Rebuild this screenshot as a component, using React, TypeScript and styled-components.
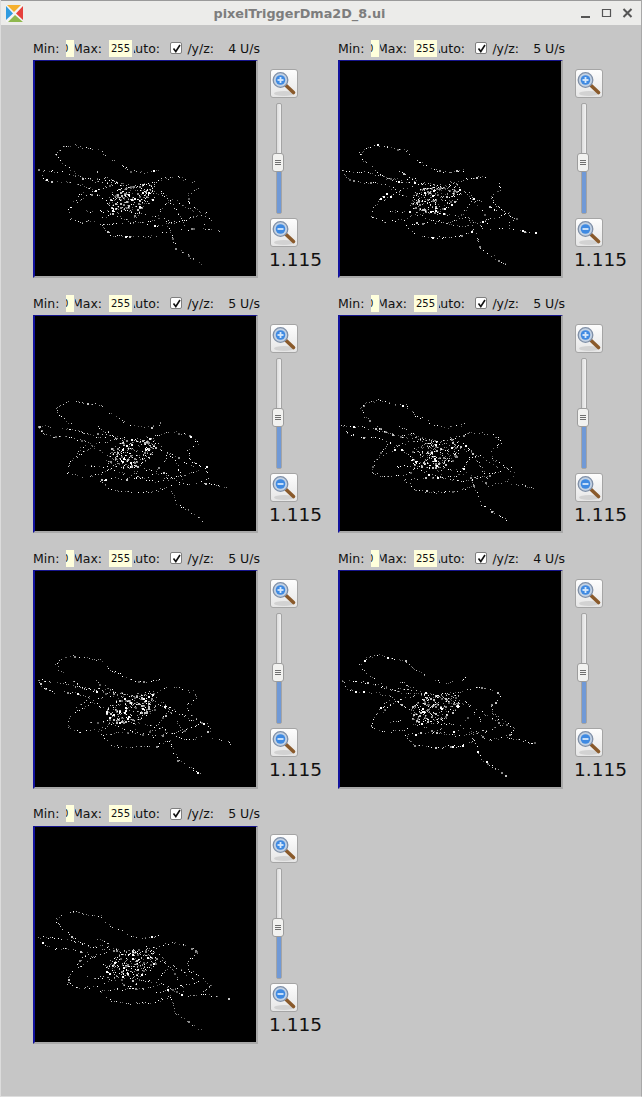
import type { FC } from "react";
import styled, { createGlobalStyle } from "styled-components";

const GlobalStyle = createGlobalStyle`
  html, body {
    margin: 0;
    padding: 0;
    background: #c6c6c6;
  }
  body {
    font-family: "DejaVu Sans", sans-serif;
  }
`;

const Window = styled.div`
  width: 642px;
  height: 1097px;
  box-sizing: border-box;
  overflow: hidden;
  background: #c6c6c6;
  border-left: 1px solid #dcdcdc;
  border-right: 1px solid #a8a8a8;
  border-bottom: 1px solid #dedede;
`;

const TitleBar = styled.div`
  height: 25px;
  display: flex;
  align-items: center;
  background: #ececea;
  border-top: 1px solid #9a9a9a;
  box-sizing: border-box;
  padding: 0 5px 0 5px;
`;

const Title = styled.div`
  flex: 1;
  text-align: center;
  padding-right: 4px;
  font-size: 12.8px;
  font-weight: bold;
  color: #7d7d7d;
`;

const WinButtons = styled.div`
  display: flex;
  gap: 10px;
  align-items: center;
  margin-right: 3px;
`;

const Grid = styled.div`
  display: grid;
  grid-template-columns: 305px 305px;
  grid-auto-rows: 255.2px;
  padding: 14px 0 0 32px;
`;

const Cell = styled.div`
  display: grid;
  grid-template-columns: 226px 1fr;
  grid-template-rows: 21px 1fr;
`;

const ControlRow = styled.div`
  grid-column: 1 / 3;
  display: flex;
  align-items: center;
  height: 18px;
  font-size: 12.5px;
  color: #111;
`;

const Label = styled.div<{ $w: number; $ml?: number; $left?: boolean }>`
  width: ${(p) => p.$w}px;
  margin-left: ${(p) => p.$ml ?? 0}px;
  flex: none;
  display: flex;
  justify-content: ${(p) => (p.$left ? "flex-start" : "flex-end")};
  overflow: hidden;
  white-space: nowrap;
`;

const NumInput = styled.div<{ $w: number; $ml: number; $clip?: boolean }>`
  width: ${(p) => p.$w}px;
  margin-left: ${(p) => p.$ml}px;
  height: 17px;
  flex: none;
  overflow: hidden;
  background: #ffffdc;
  font-size: 10px;
  line-height: 17px;
  white-space: nowrap;
  text-align: ${(p) => (p.$clip ? "left" : "center")};
  text-indent: ${(p) => (p.$clip ? "-4px" : "0")};
`;

const Check = styled.div`
  width: 10px;
  height: 10px;
  margin-left: 10px;
  flex: none;
  border: 1px solid #7f7f7f;
  border-radius: 2px;
  background: #fff;
  display: flex;
  align-items: center;
  justify-content: center;
`;

const Plot = styled.div`
  width: 225px;
  height: 218.2px;
  box-sizing: border-box;
  background: #000;
  border-top: 1px solid #16148c;
  border-left: 2px solid #12129c;
  border-right: 2px solid #a9a9a9;
  border-bottom: 2px solid #a9a9a9;
  svg {
    display: block;
  }
`;

const Side = styled.div`
  display: flex;
  flex-direction: column;
  align-items: flex-start;
  padding: 8.8px 0 0 11px;
`;

const ZoomButton = styled.div`
  width: 28px;
  height: 29px;
  box-sizing: border-box;
  border: 1px solid #a5a5a5;
  border-radius: 3px;
  background: linear-gradient(#fdfdfd, #e6e6e6);
  svg {
    display: block;
  }
`;

const Slider = styled.div`
  position: relative;
  width: 6px;
  height: 111px;
  margin: 5px 0 4px 6px;
  box-sizing: border-box;
  border: 1px solid #a4a4a4;
  border-radius: 2px;
  background: linear-gradient(90deg, #dcdcdc, #f2f2f2);
`;

const SliderFill = styled.div`
  position: absolute;
  left: 0;
  right: 0;
  bottom: 0;
  top: 58px;
  background: #7099d6;
`;

const SliderHandle = styled.div`
  position: absolute;
  left: -5px;
  top: 49px;
  width: 12px;
  height: 19px;
  box-sizing: border-box;
  border: 1px solid #9d9d9d;
  border-radius: 3px;
  background: #f2f2f0;
  display: flex;
  flex-direction: column;
  gap: 1px;
  align-items: center;
  justify-content: center;
`;

const Grip = styled.div`
  width: 6px;
  height: 1px;
  background: #707070;
`;

const Gain = styled.div`
  font-size: 18.5px;
  line-height: 24px;
  margin: 1px 0 0 -1px;
  color: #111;
`;

// curve control points of the spot pattern, in plot pixels
const curves: number[][][] = [
  [[20, 92], [27, 86], [38, 84], [52, 87], [65, 89], [73, 97], [85, 104], [95, 109], [108, 111], [122, 109], [126, 104]],
  [[20, 92], [23, 99], [30, 104], [38, 111], [45, 116], [62, 121], [82, 122]],
  [[2, 109], [12, 110], [25, 111], [38, 114], [50, 118], [70, 118], [90, 124]],
  [[2, 109], [7, 117], [18, 121], [35, 121], [52, 126], [65, 136], [80, 145]],
  [[85, 127], [108, 124], [128, 117], [142, 116], [158, 121], [161, 127], [151, 134], [153, 143], [161, 148], [175, 158], [165, 166], [148, 169], [128, 157]],
  [[195, 172], [182, 169], [165, 166]],
  [[128, 157], [135, 172], [140, 187], [151, 194], [168, 205]],
  [[65, 164], [75, 174], [95, 176], [118, 175], [135, 169]],
  [[65, 164], [78, 162], [108, 161], [128, 156]],
  [[32, 156], [33, 147], [45, 132], [55, 124]],
  [[32, 156], [45, 161], [65, 158], [85, 146]],
  [[95, 125], [88, 140], [100, 158], [108, 140], [118, 122]],
  [[75, 132], [90, 150], [120, 155], [135, 135]],
  [[42, 140], [60, 128], [85, 122], [112, 128], [140, 140], [160, 152]],
  [[110, 120], [128, 132], [140, 148], [148, 165]],
  [[50, 150], [70, 150], [95, 160], [120, 165], [150, 158], [172, 150]],
  [[60, 110], [78, 120], [92, 130]],
];

const greys = ["#5e5e5e", "#8c8c8c", "#c4c4c4", "#ffffff"];

const buildSpots = (seed: number): string[] => {
  let s = seed * 7919 + 13;
  const rnd = () => {
    s = (s * 1664525 + 1013904223) % 4294967296;
    return s / 4294967296;
  };
  const paths = ["", "", "", ""];
  const dot = (x: number, y: number, size: number) => {
    const g = Math.floor(rnd() * 4);
    paths[g] += `M${Math.round(x)} ${Math.round(y)}h${size}v${size}h-${size}z`;
  };
  const dx = (seed % 2) * 1;
  curves.forEach((pts) => {
    for (let i = 0; i < pts.length - 1; i++) {
      const [x1, y1] = pts[i];
      const [x2, y2] = pts[i + 1];
      const steps = Math.ceil(Math.hypot(x2 - x1, y2 - y1) / 2.2);
      for (let k = 0; k < steps; k++) {
        if (rnd() < 0.3) continue;
        const t = k / steps;
        dot(x1 + (x2 - x1) * t + (rnd() - 0.5) * 2 + dx, y1 + (y2 - y1) * t + (rnd() - 0.5) * 2, rnd() < 0.06 ? 2 : 1);
      }
    }
  });
  // dense core
  for (let i = 0; i < 210; i++) {
    const a = rnd() * Math.PI * 2;
    const r = Math.sqrt(rnd());
    const x = 95 + dx + Math.cos(a) * r * 25 - Math.sin(a) * r * 3;
    const y = 137 + Math.sin(a) * r * 15 - Math.cos(a) * r * 3;
    dot(x, y, rnd() < 0.2 ? 2 : 1);
  }
  return paths;
};

const Spots: FC<{ seed: number }> = ({ seed }) => (
  <svg width={221} height={215} viewBox="0 0 221 215" shapeRendering="crispEdges">
    {buildSpots(seed).map((d, i) => (
      <path key={i} d={d} fill={greys[i]} />
    ))}
  </svg>
);

const Magnifier: FC<{ plus?: boolean }> = ({ plus }) => (
  <svg width={26} height={27} viewBox="0 0 26 27">
    <ellipse cx={13} cy={23.500} rx={10} ry={2.500} fill="#d2d2d2" />
    <path d="M14.500 15 L22.500 22.500" stroke="#8a5a2b" strokeWidth={3.6} strokeLinecap="round" />
    <circle cx={9.500} cy={10} r={7.300} fill="#c3d2e4" stroke="#7f8fa6" strokeWidth={1.300} />
    <circle cx={9.500} cy={10} r={4.800} fill="#3f8ae2" />
    <path d="M6.500 10h6" stroke="#d6e8fb" strokeWidth={1.800} />
    {plus && <path d="M9.500 7v6" stroke="#d6e8fb" strokeWidth={1.800} />}
  </svg>
);

const Logo: FC = () => (
  <svg width={17} height={17} viewBox="0 0 17 17">
    <rect width={17} height={17} fill="#f4f4f4" />
    <path d="M1 0h14L8 7z" fill="#f6b02c" />
    <path d="M17 1v14l-7-6.500z" fill="#e5403c" />
    <path d="M0 1v14l7-6.500z" fill="#2f9be0" />
    <path d="M2 17h15L9 10z" fill="#8fb84e" />
  </svg>
);

const rates = [4, 5, 5, 5, 5, 4, 5];

const Panel: FC<{ rate: number; seed: number }> = ({ rate, seed }) => (
  <Cell>
    <ControlRow>
      <Label $w={30} $left>Min:</Label>
      <NumInput $w={8} $ml={3} $clip>0</NumInput>
      <Label $w={27} $ml={1}>Max:</Label>
      <NumInput $w={23} $ml={7}>255</NumInput>
      <Label $w={26} $ml={2}>Auto:</Label>
      <Check>
        <svg width={9} height={9} viewBox="0 0 9 9">
          <path d="M1.500 4.500 L3.800 7.500 L8 1" fill="none" stroke="#111" strokeWidth={1.600} />
        </svg>
      </Check>
      <Label $w={27} $ml={5}>x/y/z:</Label>
      <Label $w={46}>{rate} U/s</Label>
    </ControlRow>
    <Plot>
      <Spots seed={seed} />
    </Plot>
    <Side>
      <ZoomButton>
        <Magnifier plus />
      </ZoomButton>
      <Slider>
        <SliderFill />
        <SliderHandle>
          <Grip />
          <Grip />
          <Grip />
        </SliderHandle>
      </Slider>
      <ZoomButton>
        <Magnifier />
      </ZoomButton>
      <Gain>1.115</Gain>
    </Side>
  </Cell>
);

export default function App() {
  return (
    <Window>
      <GlobalStyle />
      <TitleBar>
        <Logo />
        <Title>pixelTriggerDma2D_8.ui</Title>
        <WinButtons>
          <svg width={11} height={12} viewBox="0 0 11 12">
            <path d="M1 10h9" stroke="#555" strokeWidth={2} />
          </svg>
          <svg width={11} height={12} viewBox="0 0 11 12">
            <path d="M1.500 2.500h8v7h-8z" fill="none" stroke="#555" strokeWidth={1.200} />
          </svg>
          <svg width={11} height={12} viewBox="0 0 11 12">
            <path d="M1.500 2l8 8M9.500 2l-8 8" stroke="#555" strokeWidth={2} />
          </svg>
        </WinButtons>
      </TitleBar>
      <Grid>
        {rates.map((rate, i) => (
          <Panel key={i} rate={rate} seed={i + 1} />
        ))}
      </Grid>
    </Window>
  );
}
